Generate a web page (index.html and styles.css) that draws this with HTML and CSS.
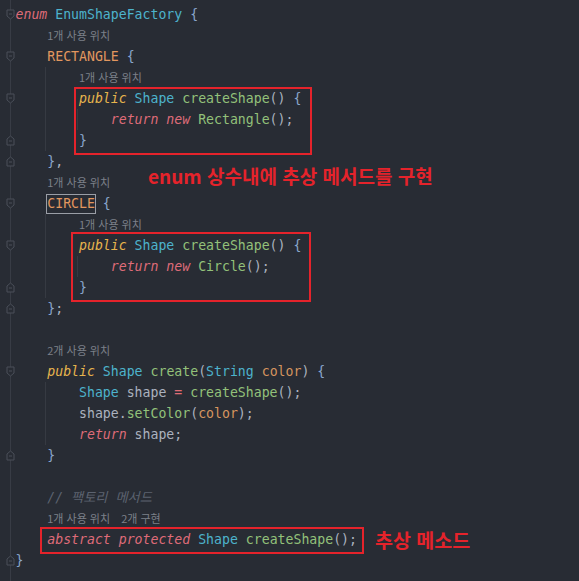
FILE: index.html
```html
<!DOCTYPE html>
<html lang="ko">
<head>
<meta charset="utf-8">
<title>EnumShapeFactory</title>
<link rel="stylesheet" href="styles.css">
</head>
<body>
<div class="editor">
  <div class="gutter">
    <div class="gc"><svg class="fold" viewBox="0 0 9 11"><path d="M1 1H8V7L4.5 10L1 7Z"/><path d="M3 5H6"/></svg></div>
    <div class="gc"></div>
    <div class="gc"><svg class="fold" viewBox="0 0 9 11"><path d="M1 1H8V7L4.5 10L1 7Z"/><path d="M3 5H6"/></svg></div>
    <div class="gc"></div>
    <div class="gc"><svg class="fold" viewBox="0 0 9 11"><path d="M1 1H8V7L4.5 10L1 7Z"/><path d="M3 5H6"/></svg></div>
    <div class="gc"></div>
    <div class="gc"><svg class="fold" viewBox="0 0 9 11"><path d="M1 10H8V4L4.5 1L1 4Z"/><path d="M3 6H6"/></svg></div>
    <div class="gc"><svg class="fold" viewBox="0 0 9 11"><path d="M1 10H8V4L4.5 1L1 4Z"/><path d="M3 6H6"/></svg></div>
    <div class="gc"></div>
    <div class="gc"><svg class="fold" viewBox="0 0 9 11"><path d="M1 1H8V7L4.5 10L1 7Z"/><path d="M3 5H6"/></svg></div>
    <div class="gc"></div>
    <div class="gc"><svg class="fold" viewBox="0 0 9 11"><path d="M1 1H8V7L4.5 10L1 7Z"/><path d="M3 5H6"/></svg></div>
    <div class="gc"></div>
    <div class="gc"><svg class="fold" viewBox="0 0 9 11"><path d="M1 10H8V4L4.5 1L1 4Z"/><path d="M3 6H6"/></svg></div>
    <div class="gc"><svg class="fold" viewBox="0 0 9 11"><path d="M1 10H8V4L4.5 1L1 4Z"/><path d="M3 6H6"/></svg></div>
    <div class="gc"></div>
    <div class="gc"></div>
    <div class="gc"><svg class="fold" viewBox="0 0 9 11"><path d="M1 1H8V7L4.5 10L1 7Z"/><path d="M3 5H6"/></svg></div>
    <div class="gc"></div>
    <div class="gc"></div>
    <div class="gc"></div>
    <div class="gc"><svg class="fold" viewBox="0 0 9 11"><path d="M1 10H8V4L4.5 1L1 4Z"/><path d="M3 6H6"/></svg></div>
    <div class="gc"></div>
    <div class="gc"></div>
    <div class="gc"></div>
    <div class="gc"></div>
    <div class="gc"><svg class="fold" viewBox="0 0 9 11"><path d="M1 10H8V4L4.5 1L1 4Z"/><path d="M3 6H6"/></svg></div>
  </div>

  <div class="code">
    <div class="ln"><span class="kw">enum</span> <span class="ty">EnumShapeFactory</span> <span class="br">{</span></div>
    <div class="ind">
      <div class="ln hint">1개 사용 위치</div>
      <div class="ln"><span class="en">RECTANGLE</span> <span class="br">{</span></div>
      <div class="guide">
        <div class="ln hint">1개 사용 위치</div>
        <div class="ln"><span class="mod">public</span> <span class="ty">Shape</span> <span class="fn">createShape</span><span class="p">()</span> <span class="br">{</span></div>
        <div class="guide">
          <div class="ln"><span class="kw">return</span> <span class="kw">new</span> <span class="fn">Rectangle</span><span class="p">();</span></div>
        </div>
        <div class="ln"><span class="br">}</span></div>
      </div>
      <div class="ln"><span class="br">}</span><span class="p">,</span></div>
      <div class="ln hint">1개 사용 위치</div>
      <div class="ln"><span class="en sel">CIRCLE</span> <span class="br">{</span></div>
      <div class="guide">
        <div class="ln hint">1개 사용 위치</div>
        <div class="ln"><span class="mod">public</span> <span class="ty">Shape</span> <span class="fn">createShape</span><span class="p">()</span> <span class="br">{</span></div>
        <div class="guide">
          <div class="ln"><span class="kw">return</span> <span class="kw">new</span> <span class="fn">Circle</span><span class="p">();</span></div>
        </div>
        <div class="ln"><span class="br">}</span></div>
      </div>
      <div class="ln"><span class="br">}</span><span class="p">;</span></div>
      <div class="ln"></div>
      <div class="ln hint">2개 사용 위치</div>
      <div class="ln"><span class="mod">public</span> <span class="ty">Shape</span> <span class="fn">create</span><span class="p">(</span><span class="ty">String</span> <span class="par">color</span><span class="p">)</span> <span class="br">{</span></div>
      <div class="guide">
        <div class="ln"><span class="ty">Shape</span> <span class="v">shape</span> <span class="op">=</span> <span class="fn">createShape</span><span class="p">();</span></div>
        <div class="ln"><span class="v">shape</span><span class="p">.</span><span class="fn">setColor</span><span class="p">(</span><span class="par">color</span><span class="p">);</span></div>
        <div class="ln"><span class="kw">return</span> <span class="v">shape</span><span class="p">;</span></div>
      </div>
      <div class="ln"><span class="br">}</span></div>
      <div class="ln"></div>
      <div class="ln"><span class="cm">// 팩토리 메서드</span></div>
      <div class="ln hint">1개 사용 위치<span class="hint2">2개 구현</span></div>
      <div class="ln"><span class="kw">abstract</span> <span class="kw">protected</span> <span class="ty">Shape</span> <span class="fn">createShape</span><span class="p">();</span></div>
    </div>
    <div class="ln"><span class="br">}</span></div>
  </div>

  <div class="mark mark-1"></div>
  <div class="mark mark-2"></div>
  <div class="mark mark-3"></div>
  <div class="note note-1">enum 상수내에 추상 메서드를 구현</div>
  <div class="note note-2">추상 메소드</div>
</div>
</body>
</html>
```

FILE: styles.css
```css
html, body {
  margin: 0;
  padding: 0;
}

body {
  background-color: #282c34;
  background-image: linear-gradient(to right, transparent 10px, #383c45 10px, #383c45 11px, transparent 11px);
  min-height: 581px;
  overflow: hidden;
}

.editor {
  position: relative;
  display: flex;
  padding-top: 4px;
}

.gutter {
  width: 15.5px;
  flex: 0 0 15.5px;
  display: flex;
  flex-direction: column;
}

.gc {
  height: 21px;
  display: flex;
  align-items: center;
  justify-content: flex-start;
  padding-left: 6px;
}

.fold {
  width: 9px;
  height: 11px;
  display: block;
}

.fold path {
  fill: #282c34;
  stroke: #4a4f59;
  stroke-width: 1;
}

.code {
  flex: 1;
  font-family: "DejaVu Sans Mono", "Noto Sans CJK KR", monospace;
  font-size: 13.2px;
  color: #abb2bf;
}

.ln {
  height: 21px;
  line-height: 21px;
  white-space: pre;
}

.ind {
  padding-left: 4ch;
}

.guide {
  margin-left: -2px;
  padding-left: calc(4ch + 1px);
  border-left: 1px solid #363a42;
}

.hint {
  font-family: "Noto Sans CJK KR", "Noto Sans", sans-serif;
  font-size: 11px;
  color: #7c8089;
}

.hint2 {
  margin-left: 11px;
}

.kw { color: #df6b78; font-style: italic; }
.mod { color: #e6b44d; font-style: italic; }
.ty { color: #4db3cc; }
.fn { color: #93c17a; }
.en { color: #e3975f; }
.br { color: #8aa6cc; }
.p { color: #abb2bf; }
.v { color: #abb2bf; }
.par { color: #d6955f; }
.op { color: #e06c75; }
.cm { color: #5c6370; font-style: italic; }

.sel {
  display: inline-block;
  line-height: 18px;
  outline: 1px solid #9a9ea6;
}

.mark {
  position: absolute;
  box-sizing: border-box;
  border: 2px solid #e5232b;
}

.mark-1 { left: 74px; top: 87px; width: 238px; height: 68px; }
.mark-2 { left: 71px; top: 232px; width: 240px; height: 70px; }
.mark-3 { left: 40px; top: 527px; width: 324px; height: 27px; }

.note {
  position: absolute;
  font-family: "Noto Sans CJK KR", "Noto Sans", sans-serif;
  font-weight: 700;
  line-height: 24px;
  color: #e5232b;
  white-space: nowrap;
}

.note-1 { left: 148px; top: 164px; font-size: 19px; }
.note-2 { left: 375px; top: 528px; font-size: 19.5px; }
```
